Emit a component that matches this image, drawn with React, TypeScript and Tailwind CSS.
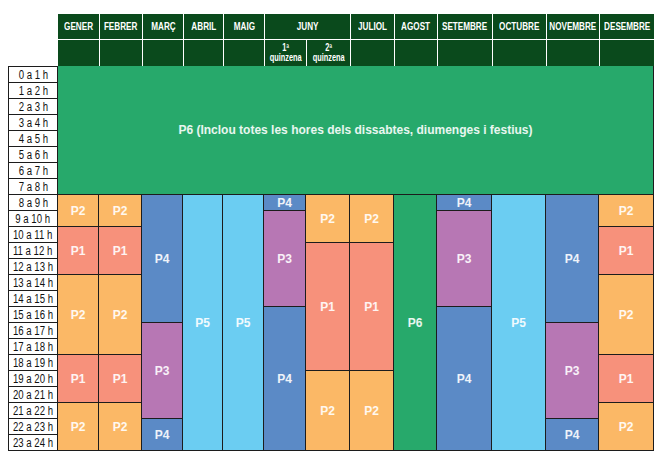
import React from 'react';

type Period = 'P1' | 'P2' | 'P3' | 'P4' | 'P5' | 'P6';

type Segment = [Period, number];

type Month = {
  name: string;
  width: string;
  segs: Segment[];
};

const bg: Record<Period, string> = {
  P1: 'bg-[#f7917b]',
  P2: 'bg-[#fbb866]',
  P3: 'bg-[#b777b4]',
  P4: 'bg-[#5b8ac6]',
  P5: 'bg-[#6bcdf2]',
  P6: 'bg-[#27a96b]',
};

// hour rows are 16px each
const heights: Record<number, string> = {
  1: 'h-4',
  2: 'h-8',
  3: 'h-12',
  5: 'h-20',
  6: 'h-24',
  8: 'h-32',
  9: 'h-36',
  16: 'h-64',
};

const winter: Segment[] = [['P2', 2], ['P1', 3], ['P2', 5], ['P1', 3], ['P2', 3]];
const spring: Segment[] = [['P4', 8], ['P3', 6], ['P4', 2]];
const early: Segment[] = [['P4', 1], ['P3', 6], ['P4', 9]];
const summer: Segment[] = [['P2', 3], ['P1', 8], ['P2', 5]];

const months: Month[] = [
  { name: 'GENER', width: 'w-[41px]', segs: winter },
  { name: 'FEBRER', width: 'w-[43px]', segs: winter },
  { name: 'MARÇ', width: 'w-[41px]', segs: spring },
  { name: 'ABRIL', width: 'w-[40px]', segs: [['P5', 16]] },
  { name: 'MAIG', width: 'w-[41px]', segs: [['P5', 16]] },
  { name: 'JUNY1', width: 'w-[42px]', segs: early },
  { name: 'JUNY2', width: 'w-[44px]', segs: summer },
  { name: 'JULIOL', width: 'w-[44px]', segs: summer },
  { name: 'AGOST', width: 'w-[43px]', segs: [['P6', 16]] },
  { name: 'SETEMBRE', width: 'w-[55px]', segs: early },
  { name: 'OCTUBRE', width: 'w-[54px]', segs: [['P5', 16]] },
  { name: 'NOVEMBRE', width: 'w-[53px]', segs: spring },
  { name: 'DESEMBRE', width: 'w-[55px]', segs: winter },
];

const hours = Array.from({ length: 24 }, (_, i) => `${i} a ${i + 1} h`);

// no narrow face installed, so squeeze Liberation Sans like a condensed cut
const Narrow: React.FC<{ children: React.ReactNode }> = ({ children }) => (
  <span className="inline-block whitespace-nowrap scale-x-[0.8]">{children}</span>
);

const Condensed: React.FC<{ children: React.ReactNode }> = ({ children }) => (
  <span className="inline-block whitespace-nowrap scale-x-[0.74]">{children}</span>
);

const Header: React.FC = () => (
  <div className="grid grid-cols-[41px_43px_41px_40px_41px_42px_44px_44px_43px_55px_54px_53px_55px] grid-rows-[26px_26px] bg-[#0a4a1c] text-white font-bold">
    {['GENER', 'FEBRER', 'MARÇ', 'ABRIL', 'MAIG'].map((m, i) => (
      <div
        key={m}
        className={`flex items-center justify-center border-b border-white text-[11px] ${i > 0 ? 'border-l' : ''}`}
      >
        <Condensed>{m}</Condensed>
      </div>
    ))}
    <div className="col-span-2 flex items-center justify-center border-b border-l border-white text-[11px]">
      <Condensed>JUNY</Condensed>
    </div>
    {['JULIOL', 'AGOST', 'SETEMBRE', 'OCTUBRE', 'NOVEMBRE', 'DESEMBRE'].map((m) => (
      <div
        key={m}
        className="flex items-center justify-center border-b border-l border-white text-[11px]"
      >
        <Condensed>{m}</Condensed>
      </div>
    ))}
    {Array.from({ length: 13 }, (_, i) => (
      <div
        key={i}
        className={`flex flex-col items-center justify-center text-[10px] leading-[10px] ${i > 0 ? 'border-l border-white' : ''}`}
      >
        {(i === 5 || i === 6) && (
          <>
            <Condensed>{i === 5 ? '1ª' : '2ª'}</Condensed>
            <Condensed>quinzena</Condensed>
          </>
        )}
      </div>
    ))}
  </div>
);

export default function App() {
  return (
    <div className="min-h-screen bg-white pl-[8px] pt-[14px] font-['Liberation_Sans',Arial,sans-serif]">
      <div className="flex">
        <div className="w-[50px] flex flex-col">
          <div className="h-[52px]" />
          <div className="border-x border-t border-[#1c1c1c] text-[12px] text-[#111]">
            {hours.map((h) => (
              <div
                key={h}
                className="h-4 flex items-center justify-center border-b border-[#1c1c1c] leading-none"
              >
                <Narrow>{h}</Narrow>
              </div>
            ))}
          </div>
        </div>

        <div className="w-[596px] flex flex-col">
          <Header />
          <div className="h-32 bg-[#27a96b] border-r border-[#1c1c1c] flex items-center justify-center text-[12px] font-bold text-white/90">
            P6 (Inclou totes les hores dels dissabtes, diumenges i festius)
          </div>
          <div className="flex border-b border-[#1c1c1c]">
            {months.map((m) => (
              <div key={m.name} className={`${m.width} flex flex-col border-r border-[#1c1c1c]`}>
                {m.segs.map(([p, n], i) => (
                  <div
                    key={i}
                    className={`${heights[n]} ${bg[p]} border-t border-[#1c1c1c] flex items-center justify-center text-[12px] font-bold text-white/90`}
                  >
                    {p}
                  </div>
                ))}
              </div>
            ))}
          </div>
        </div>
      </div>
    </div>
  );
}
